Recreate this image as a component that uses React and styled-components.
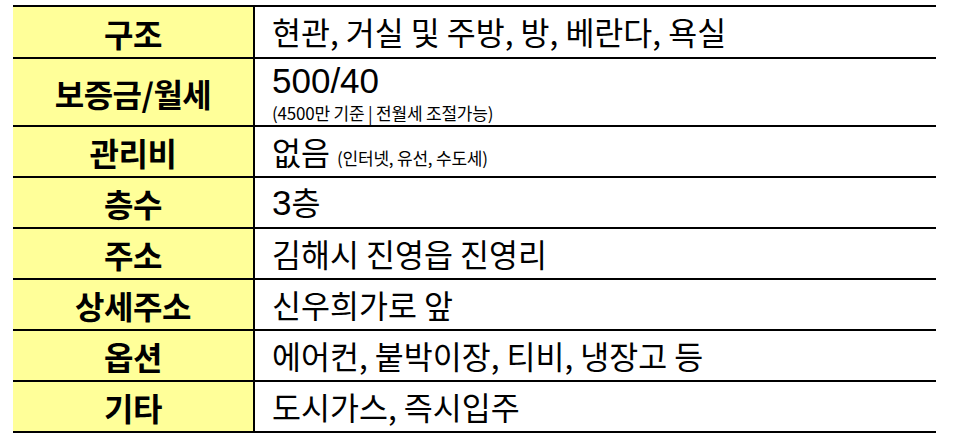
import React from "react";
import styled, { createGlobalStyle } from "styled-components";

const Global = createGlobalStyle`
  html, body { margin: 0; padding: 0; background: #fff; }
  body { font-family: "Noto Sans CJK KR", "Noto Sans", sans-serif; color: #000; }
`;

const Page = styled.div`
  padding: 5px 0 0 13px;
`;

const Table = styled.div`
  width: 923px;
  border-bottom: 2px solid #000;
`;

const Row = styled.div`
  display: grid;
  grid-template-columns: 242px 1fr;
  height: ${(p) => p.$h}px;
  border-top: 2px solid #000;
  box-sizing: border-box;
`;

const Label = styled.div`
  background: #ffff99;
  border-right: 2px solid #000;
  display: flex;
  align-items: center;
  justify-content: center;
  font-weight: 700;
  font-size: 32px;
  letter-spacing: -0.5px;
  line-height: 1;
  padding-top: 1px;
`;

const Value = styled.div`
  display: flex;
  flex-direction: ${(p) => (p.$stack ? "column" : "row")};
  justify-content: ${(p) => (p.$stack ? "center" : "flex-start")};
  align-items: ${(p) => (p.$stack ? "flex-start" : "center")};
  padding-left: 17px;
  font-size: 31.5px;
  line-height: 1;
  white-space: nowrap;
`;

const Line = styled.div`
  display: flex;
  align-items: baseline;
`;

const Num = styled.span`
  font-family: "Liberation Sans", "Noto Sans CJK KR", sans-serif;
  font-size: 35px;
`;

const Note = styled.span`
  font-size: 17px;
  margin-left: ${(p) => p.$ml || 0}px;
  margin-top: ${(p) => p.$mt || 0}px;
  letter-spacing: -0.2px;
`;

const rows = [
  { label: "구조", h: 52, value: "현관, 거실 및 주방, 방, 베란다, 욕실" },
  { label: "보증금/월세", h: 68 },
  { label: "관리비", h: 51 },
  { label: "층수", h: 51 },
  { label: "주소", h: 51, value: "김해시 진영읍 진영리" },
  { label: "상세주소", h: 51, value: "신우희가로 앞" },
  { label: "옵션", h: 51, value: "에어컨, 붙박이장, 티비, 냉장고 등" },
  { label: "기타", h: 51, value: "도시가스, 즉시입주" },
];

function renderValue(r) {
  if (r.label === "보증금/월세") {
    return (
      <Value $stack>
        <Num>500/40</Num>
        <Note $mt={6}>(4500만 기준 | 전월세 조절가능)</Note>
      </Value>
    );
  }
  if (r.label === "관리비") {
    return (
      <Value>
        <Line>
          없음<Note $ml={7}>(인터넷, 유선, 수도세)</Note>
        </Line>
      </Value>
    );
  }
  if (r.label === "층수") {
    return (
      <Value>
        <Line>
          <Num>3</Num>층
        </Line>
      </Value>
    );
  }
  return <Value>{r.value}</Value>;
}

export default function App() {
  return (
    <>
      <Global />
      <Page>
        <Table>
          {rows.map((r) => (
            <Row key={r.label} $h={r.h}>
              <Label>{r.label}</Label>
              {renderValue(r)}
            </Row>
          ))}
        </Table>
      </Page>
    </>
  );
}
